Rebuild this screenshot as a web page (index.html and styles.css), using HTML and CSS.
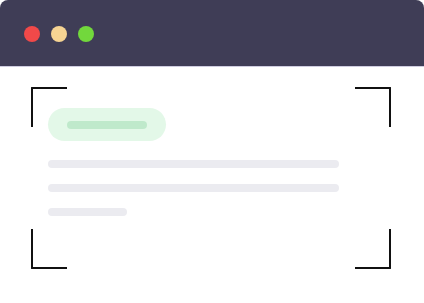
FILE: index.html
```html
<!DOCTYPE html>
<html>
<head>
<meta charset="utf-8">
<link rel="stylesheet" href="styles.css">
</head>
<body>
<div class="window">
  <div class="titlebar">
    <span class="dot dot-red"></span>
    <span class="dot dot-yellow"></span>
    <span class="dot dot-green"></span>
  </div>
  <div class="content">
    <div class="frame">
      <span class="corner corner-tl"></span>
      <span class="corner corner-tr"></span>
      <span class="corner corner-bl"></span>
      <span class="corner corner-br"></span>
      <div class="pill"><span class="pill-bar"></span></div>
      <div class="lines">
        <span class="line line-full"></span>
        <span class="line line-full"></span>
        <span class="line line-short"></span>
      </div>
    </div>
  </div>
</div>
</body>
</html>
```
FILE: styles.css
```css
html, body {
  margin: 0;
  padding: 0;
  background: #ffffff;
}
.window {
  width: 424px;
  height: 303px;
  display: flex;
  flex-direction: column;
  background: #ffffff;
}
.titlebar {
  height: 67px;
  box-sizing: border-box;
  background: #3f3d56;
  border-radius: 8px 8px 0 0;
  border-bottom: 1px solid #cfcde0;
  display: flex;
  align-items: center;
  gap: 11px;
  padding: 2px 0 0 24px;
}
.dot {
  width: 16px;
  height: 16px;
  border-radius: 50%;
  display: block;
}
.dot-red { background: #f14949; }
.dot-yellow { background: #f6d493; }
.dot-green { background: #72d83c; }
.content {
  flex: 1;
  padding: 20px 0 0 31px;
}
.frame {
  position: relative;
  width: 360px;
  height: 182px;
  box-sizing: border-box;
  padding: 21px 0 0 17px;
}
.corner {
  position: absolute;
  width: 34px;
  height: 38px;
  border: 0 solid #111111;
}
.corner-tl { top: 0; left: 0; border-top-width: 2px; border-left-width: 2px; border-top-left-radius: 1px; }
.corner-tr { top: 0; right: 0; border-top-width: 2px; border-right-width: 2px; border-top-right-radius: 1px; }
.corner-bl { bottom: 0; left: 0; border-bottom-width: 2px; border-left-width: 2px; border-bottom-left-radius: 1px; }
.corner-br { bottom: 0; right: 0; border-bottom-width: 2px; border-right-width: 2px; border-bottom-right-radius: 1px; }
.pill {
  width: 118px;
  height: 33px;
  border-radius: 17px;
  background: #e3f8e8;
  display: flex;
  align-items: center;
  padding-left: 19px;
  box-sizing: border-box;
}
.pill-bar {
  display: block;
  width: 80px;
  height: 8px;
  border-radius: 4px;
  background: #bfe9cb;
}
.lines {
  display: flex;
  flex-direction: column;
  gap: 16px;
  margin-top: 19px;
}
.line {
  display: block;
  height: 8px;
  border-radius: 4px;
  background: #ebebf0;
}
.line-full { width: 291px; }
.line-short { width: 79px; }
```
